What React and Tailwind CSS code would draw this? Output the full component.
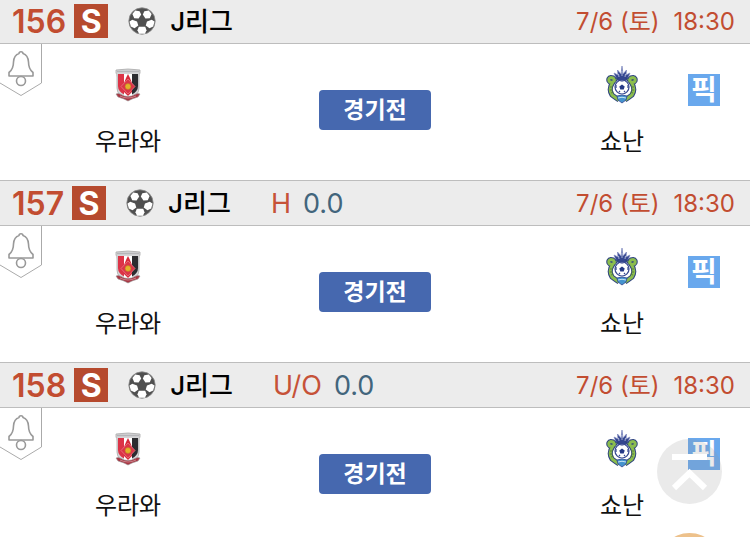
import React from "react";

const matches = [
  { id: 156 },
  { id: 157, type: "H", line: "0.0" },
  { id: 158, type: "U/O", line: "0.0" },
];

function SoccerBall() {
  return (
    <svg viewBox="0 0 28 28" className="size-7" aria-hidden="true">
      <circle cx="14" cy="14" r="13.2" fill="#505050" stroke="#8c8c8c" strokeWidth=".8" />
      <g fill="#fff">
        <path d="M7.200 3.400 11.600 4.200 13.200 7.500 10.600 11.600 6.200 11.200 4.400 7Z" />
        <path d="M20.800 3.400 16.400 4.200 14.800 7.500 17.400 11.600 21.800 11.200 23.600 7Z" />
        <path d="M1.500 14.500 4.300 12.800 9 14.500 10.300 18.500 6.500 21.200 2.800 19.500Z" />
        <path d="M26.500 14.500 23.700 12.800 19 14.500 17.700 18.500 21.500 21.200 25.200 19.500Z" />
        <path d="M10.800 19.800H17.200L18.500 23.300 17 26.800H11L9.500 23.300Z" />
      </g>
    </svg>
  );
}

function HomeCrest() {
  return (
    <svg viewBox="0 0 26 34" className="h-[34px] w-[26px]" aria-hidden="true">
      <path d="M1 2Q13 0 25 2V5Q24 6 24 9V20Q24 28 13 32 2 28 2 20V9Q2 6 1 5Z" fill="#d5d5d7" stroke="#aaa" strokeWidth=".8" />
      <path d="M2 3.500H24" stroke="#b5b5b8" strokeWidth="1.500" />
      <path d="M3 6H10V27Q3 24 3 18Z" fill="#dc3447" />
      <path d="M16 6H23V18Q23 24 16 27Z" fill="#2c2c30" />
      <path d="M9 6H17V28H9Z" fill="#fff" />
      <path d="M11 10 13 6 15 10 17 15V24L13 28 9 24V15Z" fill="#d62c3c" />
      <path d="M13 11 20 18.500 13 26 6 18.500Z" fill="#dc3447" stroke="#e97880" strokeWidth=".8" />
      <circle cx="13" cy="18.500" r="2.900" fill="#e3b22b" stroke="#b67728" strokeWidth=".5" />
      <path d="M1 26Q3 25 5 26 13 31 21 26 23 25 25 26L23 29Q20 30 17 31L13 33 9 31Q6 30 3 29Z" fill="#a93542" stroke="#999" strokeWidth=".6" />
      <path d="M5 28Q13 32 21 28" fill="none" stroke="#d7a0a6" strokeWidth=".7" />
    </svg>
  );
}

function AwayCrest() {
  return (
    <svg viewBox="0 0 32 40" className="h-10 w-8" aria-hidden="true">
      <path d="M10 13 8 8 12 10 11.500 5 15 9 16 1 17 9 20.500 5 20 10 24 8 22 13 20 16H12Z" fill="#34468f" stroke="#7f8ac0" strokeWidth=".7" />
      <path d="M13 12 12.500 9M19 12 19.500 9M16 11V6" stroke="#d9def0" strokeWidth=".7" />
      <path d="M8 17Q9 12.500 5 12.500 2 13 3 16 4 18 7 17 2 24 6 30 10 33 13 35M24 17Q23 12.500 27 12.500 30 13 29 16 28 18 25 17 30 24 26 30 22 33 19 35" fill="none" stroke="#2f4480" strokeWidth="5" />
      <path d="M8 17Q9 12.500 5 12.500 2 13 3 16 4 18 7 17 2 24 6 30 10 33 13 35M24 17Q23 12.500 27 12.500 30 13 29 16 28 18 25 17 30 24 26 30 22 33 19 35" fill="none" stroke="#8bbd4d" strokeWidth="3" />
      <path d="M4 22h3M4 25h3M5 28l3-1M28 22h-3M28 25h-3M27 28l-3-1" stroke="#557b3f" strokeWidth=".9" />
      <circle cx="16" cy="22" r="7" fill="#fff" stroke="#34468f" strokeWidth="1.200" />
      <path d="M16 19.500 18.700 21.500 17.700 24.500H14.300L13.300 21.500Z" fill="#263a87" />
      <path d="M14.500 16h3M10 20v3M22 20v3M13 27l1-1M19 27l-1-1" stroke="#34468f" strokeWidth="1.200" />
      <path d="M11 31Q16 29 21 31L20 35 16 38 12 35Z" fill="#4594ce" stroke="#34468f" strokeWidth=".8" />
      <path d="M12 33Q16 31.500 20 33" fill="none" stroke="#d7ecf6" strokeWidth=".9" />
    </svg>
  );
}

function AlertButton() {
  return (
    <button type="button" aria-label="알림" className="h-[53px] w-[42px] shrink-0">
      <svg viewBox="0 0 42 53" className="h-full w-full" fill="none" aria-hidden="true">
        <path d="M41.500 0V39L21 51.500 0 39" stroke="#aaa" />
        <g stroke="#999" strokeWidth="1.600" strokeLinejoin="round">
          <path d="M19 9.500Q19 7.800 21 7.800T23 9.500Q28 11 28.500 18 28.500 25 33 28.500V32H9V28.500Q13.500 25 13.500 18 14 11 19 9.500Z" />
          <circle cx="21" cy="37" r="4.500" />
        </g>
      </svg>
    </button>
  );
}

function Team({ name, children }) {
  return (
    <div className="flex w-[132px] flex-col items-center pt-[21px]">
      <div className="flex h-10 items-center">{children}</div>
      <span className="mt-4 text-2xl leading-[42px] text-[#111]">{name}</span>
    </div>
  );
}

function Match({ match }) {
  return (
    <article>
      <header className="flex h-[46px] items-center border-y border-[#bdbdbd] bg-[#ececec] pr-[15px] pl-3 whitespace-nowrap">
        <span className="pt-0.5 text-[32px] leading-[42px] font-semibold text-[#c24d31]">{match.id}</span>
        <span className="ml-2 flex size-[34px] items-center justify-center bg-[#b64a2e] pt-0.5 text-[32px] leading-8 font-bold text-white">S</span>
        <span className="ml-5 shrink-0">
          <SoccerBall />
        </span>
        <h2 className="ml-3.5 pt-0.5 text-[26px] leading-[42px] font-medium text-black">J리그</h2>
        {match.type && (
          <p className="ml-10 flex gap-3 pt-0.5 text-[27px] leading-[42px]">
            <span className="text-[#c65238]">{match.type}</span>
            <span className="text-[#42657c]">{match.line}</span>
          </p>
        )}
        <time className="ml-auto flex gap-3.5 pt-0.5 text-2xl leading-[42px] text-[#c24d31]">
          <span>7/6 (토)</span>
          <span>18:30</span>
        </time>
      </header>
      <div className="flex h-[136px] items-start">
        <AlertButton />
        <div className="ml-5">
          <Team name="우라와"><HomeCrest /></Team>
        </div>
        <div className="flex flex-1 justify-center pt-[46px]">
          <button type="button" className="h-10 w-28 rounded bg-[#4668af] text-[23px] leading-10 font-bold text-white">경기전</button>
        </div>
        <Team name="쇼난"><AwayCrest /></Team>
        <button type="button" className="mt-[30px] mr-[30px] flex size-8 items-center justify-center bg-[#69a8ed] text-[28px] leading-8 font-bold text-white">픽</button>
      </div>
    </article>
  );
}

export default function App() {
  return (
    <div className="h-screen overflow-hidden bg-white font-[Inter,'Noto_Sans_CJK_KR',sans-serif]">
      <main className="-mt-0.5">
        {matches.map((match) => (
          <Match key={match.id} match={match} />
        ))}
      </main>
      <button type="button" aria-label="맨 위로" className="fixed top-[439px] right-7 size-[65px] rounded-full bg-[#969696]/20">
        <svg viewBox="0 0 65 65" className="h-full w-full" fill="none" stroke="#fff" strokeWidth="6" aria-hidden="true">
          <path d="M15 18H50M17 49 32.500 34 48 49" />
        </svg>
      </button>
      <button type="button" aria-label="메뉴" className="fixed top-[533px] right-7 size-[65px] rounded-full bg-[#edc18b]" />
    </div>
  );
}
